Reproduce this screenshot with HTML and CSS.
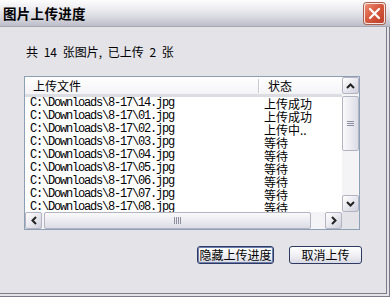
FILE: index.html
```html
<!DOCTYPE html>
<html lang="zh-CN">
<head>
    <meta charset="UTF-8">
    <meta name="viewport" content="width=device-width, initial-scale=1.0">
    <title>图片上传进度</title>
    <link rel="stylesheet" href="styles.css">
</head>
<body>
<div class="window">
  <div class="titlebar">
    <span class="title">图片上传进度</span>
    <span class="close">
      <svg width="13" height="13" viewBox="0 0 13 13"><path d="M2 2 L11 11 M11 2 L2 11" stroke="#fff" stroke-width="2.2" stroke-linecap="round"/></svg>
    </span>
  </div>

  <div class="dialog">
    <p class="summary">共 14 张图片, 已上传 2 张</p>

    <div class="list">
      <div class="view">
        <div class="head">
          <span class="col-file">上传文件</span>
          <span class="sep"></span>
          <span class="col-state">状态</span>
        </div>
        <div class="rows">
          <div class="row"><span class="path">C:\Downloads\8-17\14.jpg</span><span class="state">上传成功</span></div>
          <div class="row"><span class="path">C:\Downloads\8-17\01.jpg</span><span class="state">上传成功</span></div>
          <div class="row"><span class="path">C:\Downloads\8-17\02.jpg</span><span class="state">上传中..</span></div>
          <div class="row"><span class="path">C:\Downloads\8-17\03.jpg</span><span class="state">等待</span></div>
          <div class="row"><span class="path">C:\Downloads\8-17\04.jpg</span><span class="state">等待</span></div>
          <div class="row"><span class="path">C:\Downloads\8-17\05.jpg</span><span class="state">等待</span></div>
          <div class="row"><span class="path">C:\Downloads\8-17\06.jpg</span><span class="state">等待</span></div>
          <div class="row"><span class="path">C:\Downloads\8-17\07.jpg</span><span class="state">等待</span></div>
          <div class="row"><span class="path">C:\Downloads\8-17\08.jpg</span><span class="state">等待</span></div>
        </div>
      </div>

      <div class="vscroll">
        <span class="sbtn"><svg width="9" height="6" viewBox="0 0 9 6"><path d="M1 5 L4.5 1.5 L8 5" fill="none" stroke="#222" stroke-width="2"/></svg></span>
        <span class="vthumb"><i></i><i></i><i></i></span>
        <span class="vtrack"></span>
        <span class="sbtn"><svg width="9" height="6" viewBox="0 0 9 6"><path d="M1 1 L4.5 4.5 L8 1" fill="none" stroke="#222" stroke-width="2"/></svg></span>
      </div>

      <div class="hscroll">
        <span class="sbtn"><svg width="6" height="9" viewBox="0 0 6 9"><path d="M5 1 L1.5 4.5 L5 8" fill="none" stroke="#222" stroke-width="2"/></svg></span>
        <span class="hthumb"><i></i><i></i><i></i><i></i></span>
        <span class="htrack"></span>
        <span class="sbtn"><svg width="6" height="9" viewBox="0 0 6 9"><path d="M1 1 L4.5 4.5 L1 8" fill="none" stroke="#222" stroke-width="2"/></svg></span>
      </div>

      <div class="corner"></div>
    </div>

    <div class="buttons">
      <button class="btn focused">隐藏上传进度</button>
      <button class="btn">取消上传</button>
    </div>
  </div>
</div>
</body>
</html>
```

FILE: styles.css
```css
body { margin: 0; background: #e3e3e8; font-family: "Noto Sans CJK SC", "Liberation Sans", sans-serif; font-size: 12px; color: #000; }

.window { width: 390px; height: 297px; display: flex; flex-direction: column; overflow: hidden; }

/* title bar */
.titlebar {
  height: 27px;
  flex: none;
  display: flex;
  align-items: center;
  justify-content: space-between;
  padding-left: 3px;
  padding-right: 5px;
  box-sizing: border-box;
  background: linear-gradient(to bottom, #fdfdfe 0%, #ececf1 35%, #d6d6de 70%, #bdbdc9 100%);
  border-bottom: 1px solid #a9a9b6;
}
.title { font-size: 13.5px; font-weight: bold; letter-spacing: 0.3px; }
.close {
  width: 19px;
  height: 19px;
  border: 1px solid #f6e8e4;
  border-radius: 3px;
  display: flex;
  align-items: center;
  justify-content: center;
  background: linear-gradient(135deg, #ec8f76 0%, #d85a3f 45%, #bb3f27 100%);
  box-shadow: 0 0 0 1px #a9604f;
}

/* dialog body */
.dialog {
  flex: 1;
  border-right: 4px double #7b7b8a;
  border-bottom: 4px double #7b7b8a;
  display: flex;
  flex-direction: column;
}
.summary { margin: 17px 0 0 26px; line-height: 16px; height: 16px; word-spacing: 3px; }

/* list view */
.list {
  margin: 16px 0 0 24px;
  width: 336px;
  height: 154px;
  box-sizing: border-box;
  border: 1px solid #8d9fb5;
  background: #fff;
  display: grid;
  grid-template-columns: 1fr 17px;
  grid-template-rows: 1fr 17px;
}
.view { overflow: hidden; }
.head {
  height: 20px;
  box-sizing: border-box;
  display: flex;
  align-items: center;
  background: linear-gradient(to bottom, #ffffff, #f4f4f7);
  border-bottom: 3px solid #dcdce3;
}
.col-file { width: 225px; padding-left: 8px; }
.sep { width: 1px; height: 14px; background: #c9c9d2; box-shadow: 1px 0 0 #fff; }
.col-state { padding-left: 9px; }
.row { display: flex; height: 13px; line-height: 13px; white-space: nowrap; }
.path {
  width: 228px;
  padding-left: 5px;
  font-family: "Liberation Mono", "DejaVu Sans Mono", monospace;
  font-size: 12px;
  letter-spacing: -1.2px;
}
.state { padding-left: 6px; }

/* scroll bars */
.vscroll, .hscroll { display: flex; background: #f4f4f7; }
.vscroll { flex-direction: column; }
.sbtn {
  width: 17px;
  height: 17px;
  flex: none;
  box-sizing: border-box;
  border: 1px solid #b3b3c2;
  border-radius: 2px;
  display: flex;
  align-items: center;
  justify-content: center;
  background: linear-gradient(135deg, #ffffff 0%, #e6e6ee 55%, #cfcfdb 100%);
}
.vthumb {
  height: 55px;
  margin-top: 2px;
  flex: none;
  box-sizing: border-box;
  border: 1px solid #b3b3c2;
  border-radius: 2px;
  background: linear-gradient(to right, #fafafc, #dcdce6);
  display: flex;
  flex-direction: column;
  align-items: center;
  justify-content: center;
  gap: 1px;
}
.vthumb i { width: 7px; height: 1px; background: #8e8e9e; }
.vtrack, .htrack { flex: 1; }
.hthumb {
  width: 267px;
  margin-left: 2px;
  flex: none;
  box-sizing: border-box;
  border: 1px solid #b3b3c2;
  border-radius: 2px;
  background: linear-gradient(to bottom, #fafafc, #dcdce6);
  display: flex;
  align-items: center;
  justify-content: center;
  gap: 1px;
}
.hthumb i { width: 1px; height: 7px; background: #8e8e9e; }
.corner { background: #e3e3e8; }

/* buttons */
.buttons { display: flex; justify-content: flex-end; gap: 15px; margin: 16px 24px 0 0; }
.btn {
  height: 18px;
  padding: 0;
  box-sizing: border-box;
  border: 1px solid #2e3a63;
  border-radius: 3px;
  background: linear-gradient(to bottom, #ffffff 0%, #f1f1f5 50%, #d9d9e3 100%);
  font-family: "Noto Sans CJK SC", sans-serif;
  font-size: 12px;
  line-height: 16px;
  color: #000;
}
.btn.focused { width: 77px; box-shadow: inset 0 0 0 1px #6d7fae; }
.btn:not(.focused) { width: 73px; }
```
